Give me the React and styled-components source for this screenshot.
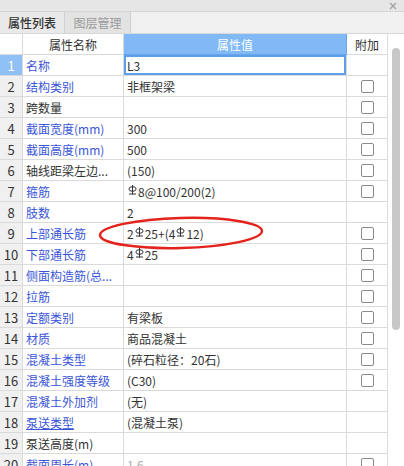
import React from "react";
import styled, { createGlobalStyle } from "styled-components";

const GlobalStyle = createGlobalStyle`
  html, body { margin: 0; padding: 0; background: #fff; }
  body { font-family: "Noto Sans CJK SC", "Noto Sans", sans-serif; }
`;

const COLS = "23px 101px 223px 41px";

const ROWS = [
  { name: "名称", value: "L3", link: true },
  { name: "结构类别", value: "非框架梁", link: true, check: true },
  { name: "跨数量", value: "", check: true },
  { name: "截面宽度(mm)", value: "300", link: true, check: true },
  { name: "截面高度(mm)", value: "500", link: true, check: true },
  { name: "轴线距梁左边...", value: "(150)", check: true },
  { name: "箍筋", value: ["R", "8@100/200(2)"], link: true, check: true },
  { name: "肢数", value: "2", link: true },
  { name: "上部通长筋", value: ["2", "R", "25+(4", "R", "12)"], link: true, check: true },
  { name: "下部通长筋", value: ["4", "R", "25"], link: true, check: true },
  { name: "侧面构造筋(总...", value: "", link: true, check: true },
  { name: "拉筋", value: "", link: true, check: true },
  { name: "定额类别", value: "有梁板", link: true, check: true },
  { name: "材质", value: "商品混凝土", link: true, check: true },
  { name: "混凝土类型", value: "(碎石粒径：20石)", link: true, check: true },
  { name: "混凝土强度等级", value: "(C30)", link: true, check: true },
  { name: "混凝土外加剂", value: "(无)", link: true },
  { name: "泵送类型", value: "(混凝土泵)", link: true, underline: true },
  { name: "泵送高度(m)", value: "" },
  { name: "截面周长(m)", value: "1.6", link: true, check: true, muted: true },
];

const Panel = styled.div`
  position: relative;
  width: 404px;
  height: 466px;
  overflow: hidden;
  background: #fff;
  font-size: 12px;
  color: #333;
`;

const TitleBar = styled.div`
  height: 11px;
  background: #e6e6e6;
  border-bottom: 1px solid #d6d6d6;
  display: flex;
  justify-content: flex-end;
  align-items: center;
  padding-right: 7px;
`;

const TabStrip = styled.div`
  height: 21px;
  background: #f0f0f0;
  border-bottom: 1px solid #d8d8d8;
  display: flex;
`;

const Tab = styled.div`
  width: ${(p) => (p.$active ? "64px" : "65px")};
  display: flex;
  align-items: center;
  justify-content: center;
  background: ${(p) => (p.$active ? "#e9e9e9" : "#e3e3e3")};
  color: ${(p) => (p.$active ? "#333" : "#9a9a9a")};
  border-right: 1px solid #d0d0d0;
  font-size: 12px;
  font-weight: ${(p) => (p.$active ? 500 : 400)};
`;

const Body = styled.div`
  display: flex;
`;

const Table = styled.div`
  width: 388px;
`;

const Row = styled.div`
  display: grid;
  grid-template-columns: ${COLS};
  height: 21px;
`;

const Cell = styled.div`
  box-sizing: border-box;
  height: 21px;
  border-right: 1px solid #dadada;
  border-bottom: 1px solid #dadada;
  display: flex;
  align-items: center;
  white-space: nowrap;
  overflow: hidden;
`;

const HeadCell = styled(Cell)`
  justify-content: center;
  background: ${(p) => (p.$selected ? "#80b9f5" : "#fff")};
  color: ${(p) => (p.$selected ? "#fff" : "#333")};
  border-right-color: ${(p) => (p.$selected ? "#6aa5ea" : "#dadada")};
  border-bottom-color: ${(p) => (p.$selected ? "#6aa5ea" : "#dadada")};
`;

const NumCell = styled(Cell)`
  justify-content: center;
  background: ${(p) => (p.$active ? "#8fc1f6" : "#f0f0f0")};
  color: ${(p) => (p.$active ? "#fff" : "#333")};
  font-size: 13px;
`;

const NameCell = styled(Cell)`
  padding-left: 3px;
  color: ${(p) => (p.$link ? "#3a55d8" : "#333")};
  text-decoration: ${(p) => (p.$underline ? "underline" : "none")};
`;

const ValueCell = styled(Cell)`
  padding-left: 3px;
  color: ${(p) => (p.$muted ? "#aaa" : "#333")};
  box-shadow: ${(p) => (p.$editing ? "inset 0 0 0 2px #5d9fe8" : "none")};
`;

const ExtraCell = styled(Cell)`
  justify-content: center;
`;

const CheckBox = styled.span`
  box-sizing: border-box;
  width: 13px;
  height: 13px;
  border: 1px solid #8a8a8a;
  border-radius: 2px;
  background: #fff;
`;

const Scroll = styled.div`
  width: 16px;
  height: 432px;
  display: flex;
  justify-content: center;
  padding-top: 14px;
  box-sizing: border-box;
`;

const Thumb = styled.div`
  width: 8px;
  height: 282px;
  background: #c8c8c8;
  border-radius: 4px;
`;

const Mark = styled.svg`
  position: absolute;
  left: 97px;
  top: 214px;
  pointer-events: none;
`;

const RebarIcon = styled.svg`
  margin: 0 1px;
  align-self: flex-start;
  margin-top: 4px;
`;

const Rebar = () => (
  <RebarIcon width="9" height="10" viewBox="0 0 9 10">
    <ellipse cx="4.5" cy="4" rx="3.6" ry="2.3" fill="none" stroke="#333" strokeWidth="1" />
    <line x1="4.5" y1="0" x2="4.5" y2="9.5" stroke="#333" strokeWidth="1" />
    <line x1="1" y1="9" x2="8" y2="9" stroke="#333" strokeWidth="1" />
  </RebarIcon>
);

const renderValue = (value) =>
  Array.isArray(value)
    ? value.map((part, i) => (part === "R" ? <Rebar key={i} /> : <span key={i}>{part}</span>))
    : value;

export default function App() {
  return (
    <Panel>
      <GlobalStyle />
      <TitleBar>
        <svg width="8" height="8" viewBox="0 0 8 8">
          <path d="M1 1 L7 7 M7 1 L1 7" stroke="#a0a0a0" strokeWidth="1.2" />
        </svg>
      </TitleBar>
      <TabStrip>
        <Tab $active>属性列表</Tab>
        <Tab>图层管理</Tab>
      </TabStrip>
      <Body>
        <Table>
          <Row>
            <HeadCell />
            <HeadCell>属性名称</HeadCell>
            <HeadCell $selected>属性值</HeadCell>
            <HeadCell>附加</HeadCell>
          </Row>
          {ROWS.map((row, i) => (
            <Row key={i}>
              <NumCell $active={i === 0}>{i + 1}</NumCell>
              <NameCell $link={row.link} $underline={row.underline}>
                {row.name}
              </NameCell>
              <ValueCell $editing={i === 0} $muted={row.muted}>
                {renderValue(row.value)}
              </ValueCell>
              <ExtraCell>{row.check && <CheckBox />}</ExtraCell>
            </Row>
          ))}
        </Table>
        <Scroll>
          <Thumb />
        </Scroll>
      </Body>
      <Mark width="170" height="40" viewBox="0 0 170 40">
        <ellipse
          cx="84"
          cy="19"
          rx="81"
          ry="15"
          fill="none"
          stroke="#e3231c"
          strokeWidth="2.5"
          transform="rotate(-1.5 84 19)"
        />
      </Mark>
    </Panel>
  );
}
